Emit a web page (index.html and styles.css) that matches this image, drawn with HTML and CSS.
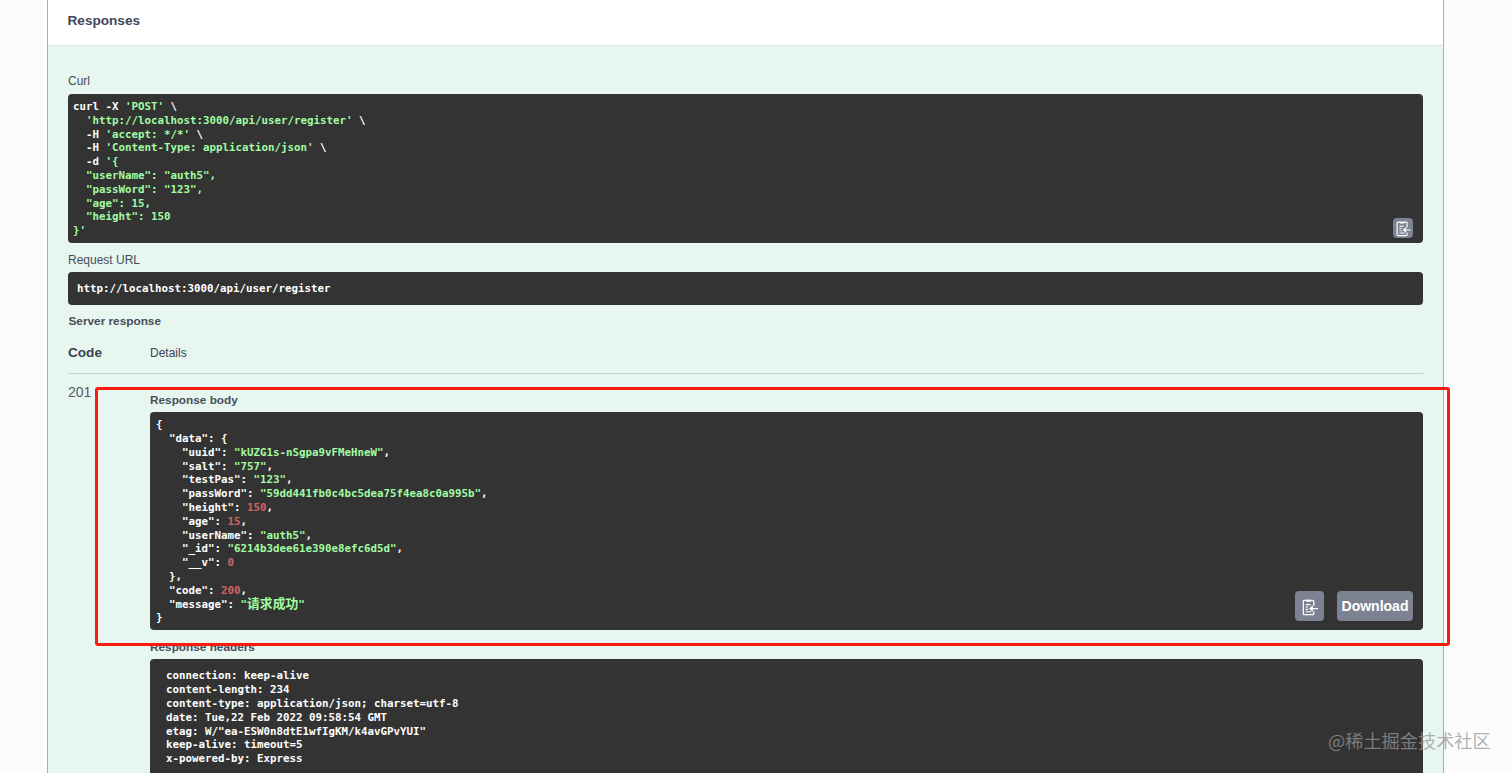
FILE: index.html
```html
<!DOCTYPE html>
<html lang="zh">
<head>
<meta charset="utf-8">
<title>Responses</title>
<link rel="stylesheet" href="styles.css">
</head>
<body>
<main class="opblock">
  <header class="section-header"><h4 class="section-title">Responses</h4></header>
  <section class="section-body">
    <h5 class="label label-curl">Curl</h5>
    <div class="code curl"><pre class="str"><span class="pl">curl -X </span>'POST'<span class="pl"> \</span>
  'http://localhost:3000/api/user/register'<span class="pl"> \</span>
  <span class="pl">-H </span>'accept: */*'<span class="pl"> \</span>
  <span class="pl">-H </span>'Content-Type: application/json'<span class="pl"> \</span>
  <span class="pl">-d </span>'{
  "userName": "auth5",
  "passWord": "123",
  "age": 15,
  "height": 150
}'</pre>
      <button class="btn-copy btn-copy-small" aria-label="Copy">
        <svg class="clip" viewBox="0 0 20 20"><use href="#clip"/></svg>
      </button>
    </div>
    <h5 class="label label-url">Request URL</h5>
    <div class="code url"><pre class="pl">http://localhost:3000/api/user/register</pre></div>
    <h4 class="label label-server">Server response</h4>
    <div class="resp-head">
      <span class="resp-code-h">Code</span>
      <span class="resp-details-h">Details</span>
    </div>
    <div class="resp-row">
      <div class="resp-code">201</div>
      <div class="resp-details">
        <h5 class="label label-body">Response body</h5>
        <div class="code body"><pre class="pl">{
  "data": {
    "uuid": <span class="str">"kUZG1s-nSgpa9vFMeHneW"</span>,
    "salt": <span class="str">"757"</span>,
    "testPas": <span class="str">"123"</span>,
    "passWord": <span class="str">"59dd441fb0c4bc5dea75f4ea8c0a995b"</span>,
    "height": <span class="num">150</span>,
    "age": <span class="num">15</span>,
    "userName": <span class="str">"auth5"</span>,
    "_id": <span class="str">"6214b3dee61e390e8efc6d5d"</span>,
    "__v": <span class="num">0</span>
  },
  "code": <span class="num">200</span>,
  "message": <span class="str">"<span class="cjk">请求成功</span>"</span>
}</pre>
          <div class="body-actions">
            <button class="btn-copy btn-copy-big" aria-label="Copy">
              <svg class="clip" viewBox="0 0 20 20"><use href="#clip"/></svg>
            </button>
            <button class="btn-download">Download</button>
          </div>
        </div>
        <h5 class="label label-headers">Response headers</h5>
        <div class="code headers"><pre class="pl"> connection: keep-alive
 content-length: 234
 content-type: application/json; charset=utf-8
 date: Tue,22 Feb 2022 09:58:54 GMT
 etag: W/"ea-ESW0n8dtE1wfIgKM/k4avGPvYUI"
 keep-alive: timeout=5
 x-powered-by: Express</pre></div>
      </div>
    </div>
  </section>
</main>
<div class="annotation"></div>
<div class="watermark">@稀土掘金技术社区</div>
<svg class="defs" width="0" height="0" aria-hidden="true">
  <symbol id="clip" viewBox="0 0 20 20">
    <path d="M7 3.500H4.500a1 1 0 0 0-1 1V17.500a1 1 0 0 0 1 1h9a1 1 0 0 0 1-1V15M14.500 9.500V4.500a1 1 0 0 0-1-1H11" fill="none" stroke="#fff" stroke-width="1.300"/>
    <path d="M6.500 5V3H8.200a1 1 0 0 1 1.800 0h1.500v2z" fill="#fff"/>
    <path d="M6 8h5M6 10.500h2.500M6 13h2.500M6 15.500h6" fill="none" stroke="#fff" stroke-width="1.200"/>
    <path d="M19 11.600h-5.500V9l-4 3.200 4 3.200v-2.600H19z" fill="#fff"/>
  </symbol>
</svg>
</body>
</html>
```
FILE: styles.css
```css
html, body {
  margin: 0;
  padding: 0;
  height: 773px;
  overflow: hidden;
  background: #fcfcfc;
  font-family: "Liberation Sans", Arial, sans-serif;
  color: #3b4151;
}

.opblock {
  width: 1395px;
  margin-left: 47px;
  border-left: 1px solid #74cda5;
  border-right: 1px solid #74cda5;
  background: #e8f6f0;
}

.section-header {
  height: 46px;
  background: #fff;
  box-sizing: border-box;
  padding: 13px 20px 0 19.500px;
  border-bottom: 1px solid #d8e8e0;
}

.section-title {
  margin: 0;
  font-size: 13.600px;
  line-height: 16px;
  font-weight: 700;
  color: #41465a;
}

.section-body {
  padding: 0 20px;
}

.label {
  margin: 0;
  font-size: 12px;
  line-height: 14px;
  font-weight: 400;
  color: #474c5b;
}

.label-curl { padding-top: 28px; padding-bottom: 6px; }
.label-url { padding-top: 10px; padding-bottom: 5px; }
.label-server { padding: 9px 0 0 0.500px; font-weight: 700; font-size: 11.800px; }
.label-body { padding-bottom: 5px; font-weight: 700; font-size: 11.800px; }
.label-headers { padding-top: 10px; padding-bottom: 5px; font-weight: 700; font-size: 11.800px; }

.code {
  position: relative;
  background: #333;
  border-radius: 4px;
}

.code pre {
  margin: 0;
  font-family: "DejaVu Sans Mono", "Noto Sans CJK SC", monospace;
  font-size: 10.800px;
  line-height: 13.800px;
  font-weight: 700;
  white-space: pre;
}

.pl { color: #fff; }
.str { color: #a2fca2; }
.num { color: #d36363; }
.cjk { font-family: "Noto Sans CJK SC", sans-serif; font-size: 12.800px; line-height: 0; }

.curl { height: 149px; box-sizing: border-box; padding: 6px 5px 5px; }
.url { height: 33px; box-sizing: border-box; padding: 10px 9px 9px; }
.body { height: 218px; box-sizing: border-box; padding: 6.300px 6px 6px; }
.headers { height: 130px; box-sizing: border-box; padding: 10.400px 10px 10px 9.500px; }

.resp-head {
  display: flex;
  align-items: center;
  height: 46px;
  box-sizing: border-box;
  padding-top: 6px;
  padding-bottom: 2px;
  border-bottom: 1px solid #c4d2cc;
}

.resp-code-h {
  width: 82px;
  font-size: 13.600px;
  font-weight: 700;
}

.resp-details-h {
  font-size: 12px;
}

.resp-row {
  display: flex;
  padding-top: 10px;
}

.resp-code {
  width: 82px;
  flex: none;
  font-size: 14px;
  line-height: 16px;
  color: #555a68;
}

.resp-details {
  flex: 1;
  padding-top: 9px;
}

.btn-copy {
  display: flex;
  align-items: center;
  justify-content: center;
  padding: 0;
  border: 0;
  background: #7d8293;
  border-radius: 4px;
}

.btn-copy-small {
  position: absolute;
  right: 10px;
  bottom: 5px;
  width: 20px;
  height: 20px;
}

.btn-copy-big {
  width: 29px;
  height: 30px;
}

.clip { width: 18px; height: 18px; }
.btn-copy-big .clip { width: 19px; height: 19px; }

.body-actions {
  position: absolute;
  right: 10px;
  bottom: 9px;
  display: flex;
  gap: 13px;
}

.btn-download {
  width: 76px;
  height: 30px;
  padding: 0;
  border: 0;
  border-radius: 4px;
  background: #7d8293;
  color: #fff;
  font-family: "Liberation Sans", Arial, sans-serif;
  font-size: 14px;
  font-weight: 700;
}

.annotation {
  position: absolute;
  left: 95px;
  top: 387px;
  width: 1349px;
  height: 253px;
  border: 3px solid #fb1a10;
  border-radius: 3px;
}

.watermark {
  position: absolute;
  left: 1328px;
  top: 727px;
  font-family: "Noto Sans CJK SC", sans-serif;
  font-size: 18.200px;
  line-height: 26px;
  color: rgba(150, 150, 150, 0.75);
  white-space: nowrap;
}

.defs { position: absolute; }
```
